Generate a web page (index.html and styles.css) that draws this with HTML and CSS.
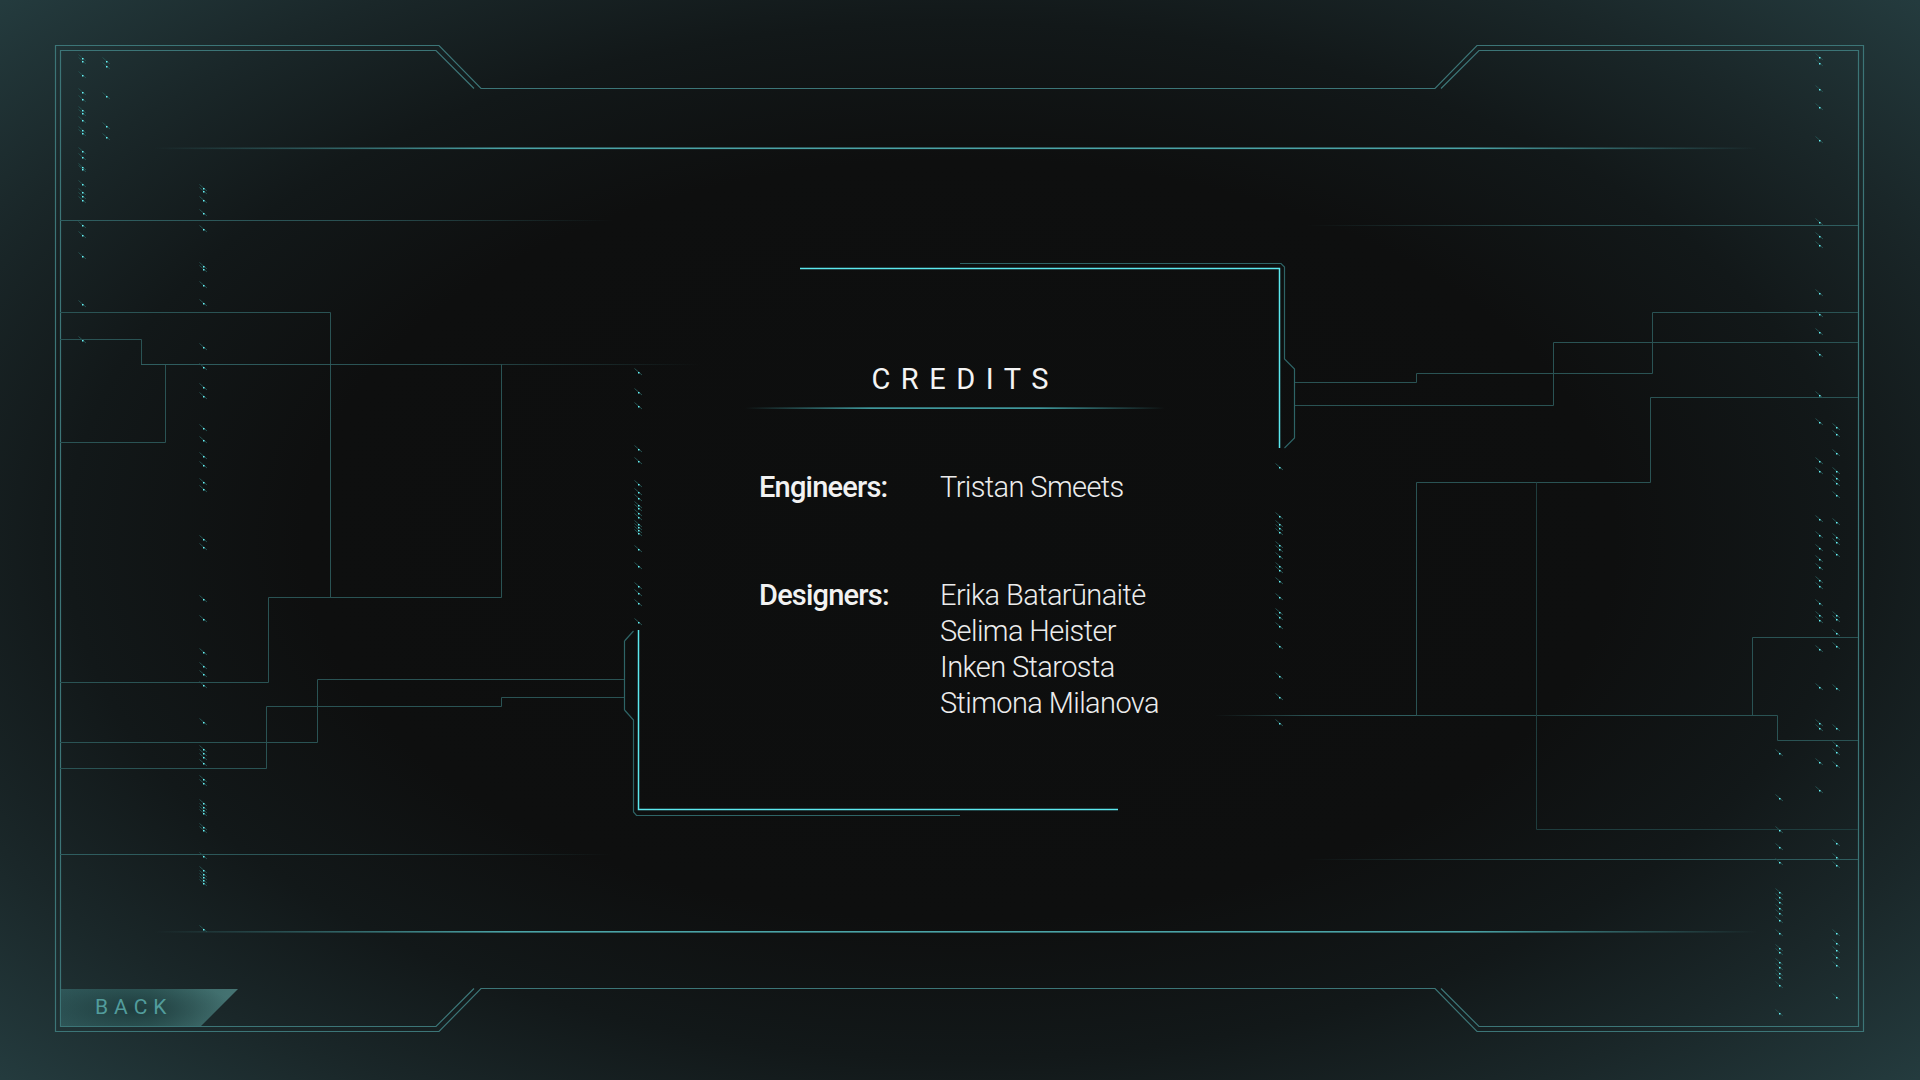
FILE: index.html
```html
<!DOCTYPE html>
<html lang="en">
<head>
<meta charset="utf-8">
<title>Credits</title>
<link rel="stylesheet" href="styles.css">
</head>
<body>
<div class="screen">
  <svg class="deco" width="1920" height="1080" viewBox="0 0 1920 1080" aria-hidden="true">
    <defs>
      <linearGradient id="glow" x1="0" y1="0" x2="1" y2="0">
        <stop offset="0" stop-color="#4aa3a6" stop-opacity="0"/>
        <stop offset="0.22" stop-color="#4aa3a6" stop-opacity="1"/>
        <stop offset="0.82" stop-color="#4aa3a6" stop-opacity="1"/>
        <stop offset="1" stop-color="#4aa3a6" stop-opacity="0"/>
      </linearGradient>
      <linearGradient id="fadeR" x1="0" y1="0" x2="1" y2="0">
        <stop offset="0" stop-color="#2f5e60" stop-opacity="1"/>
        <stop offset="0.55" stop-color="#2f5e60" stop-opacity="0.8"/>
        <stop offset="1" stop-color="#2f5e60" stop-opacity="0"/>
      </linearGradient>
      <linearGradient id="fadeL" x1="0" y1="0" x2="1" y2="0">
        <stop offset="0" stop-color="#2f5e60" stop-opacity="0"/>
        <stop offset="0.45" stop-color="#2f5e60" stop-opacity="0.8"/>
        <stop offset="1" stop-color="#2f5e60" stop-opacity="1"/>
      </linearGradient>
      <linearGradient id="rule" x1="0" y1="0" x2="1" y2="0">
        <stop offset="0" stop-color="#5ce8ee" stop-opacity="0"/>
        <stop offset="0.3" stop-color="#5ce8ee" stop-opacity="0.9"/>
        <stop offset="0.7" stop-color="#5ce8ee" stop-opacity="0.9"/>
        <stop offset="1" stop-color="#5ce8ee" stop-opacity="0"/>
      </linearGradient>
      <g id="d">
        <path d="M-3.5 -3.5 L4 3" stroke="#24504f" stroke-width="1"/>
        <rect x="0" y="0" width="1.5" height="1.5" fill="#66f4f7"/>
      </g>
    </defs>

    <!-- frame -->
    <g class="frame" fill="none">
      <path d="M55.5 45.5 H439 L481 88.5 H1435 L1477 45.5 H1863.5 V1031.5 H1477 L1435 988.5 H481 L439 1031.5 H55.5 Z"/>
      <path d="M474 88.5 L436 50.5 H60.5 V1026.5 H436 L474 988.5"/>
      <path d="M1441 88.5 L1479 50.5 H1858.5 V1026.5 H1479 L1441 988.5"/>
    </g>

    <!-- glow lines -->
    <rect x="154" y="147.5" width="1603" height="1.6" fill="url(#glow)"/>
    <rect x="154" y="931" width="1603" height="1.6" fill="url(#glow)"/>

    <!-- faint horizontals -->
    <rect x="60" y="220" width="554" height="1" fill="url(#fadeR)"/>
    <rect x="1306" y="225" width="552" height="1" fill="url(#fadeL)"/>
    <rect x="60" y="854" width="552" height="1" fill="url(#fadeR)"/>
    <rect x="1304" y="859" width="554" height="1" fill="url(#fadeL)"/>

    <!-- left circuits -->
    <g class="circ" fill="none">
      <path d="M60 312.5 H330.5 V597.5"/>
      <path d="M268.5 597.5 H501.5 V364.5"/>
      <path d="M60 339.5 H141.5 V364.5"/>
      <path d="M165.5 364.5 V442.5 H60"/>
      <path d="M268.5 597.5 V682.5 H60"/>
      <path d="M624 679.5 H317.5 V742.5 H60"/>
      <path d="M624 697.5 H501.5 V706.5 H266.5 V768.5 H60"/>
    </g>
    <rect x="141" y="364" width="560" height="1" fill="url(#fadeR)"/>

    <!-- right circuits -->
    <g class="circ" fill="none">
      <path d="M1294 382.5 H1416.5 V373.5 H1652.5 V312.5 H1858"/>
      <path d="M1294 405.5 H1553.5 V342.5 H1858"/>
      <path d="M1858 397.5 H1650.5 V482.5 H1416.5 V715"/>
      <path d="M1416 715.5 H1777.5 V740.5 H1858"/>
      <path d="M1752.5 715 V637.5 H1858"/>
    </g>
    <path class="circ-dim" fill="none" d="M1536.5 482.5 V829.5 H1858"/>
    <rect x="1214" y="715" width="202" height="1" fill="url(#fadeL)"/>

    <!-- credits panel -->
    <g class="panel-dim" fill="none">
      <path d="M960 263.5 H1281 L1284.5 267 V359 L1294.5 369 V438 L1284.5 448"/>
      <path d="M624.5 641 V710 M624.5 641 L633.5 631 M624.5 710 L633.5 720 V812 L636.5 815.5 H960"/>
    </g>
    <g class="panel-bright" fill="none">
      <path d="M800 268.5 H1279.5 V448"/>
      <path d="M638.5 630 V809.5 H1118"/>
    </g>
    <rect x="745" y="407.5" width="420" height="1.2" fill="url(#rule)"/>

    <!-- dots -->
    <g class="dots">
      <use href="#d" x="82" y="58"/><use href="#d" x="82" y="61"/><use href="#d" x="82" y="75"/><use href="#d" x="82" y="92"/><use href="#d" x="82" y="99"/><use href="#d" x="82" y="110"/><use href="#d" x="82" y="113"/><use href="#d" x="82" y="120"/><use href="#d" x="82" y="130"/><use href="#d" x="82" y="133"/><use href="#d" x="82" y="151"/><use href="#d" x="82" y="157"/><use href="#d" x="82" y="167"/><use href="#d" x="82" y="169"/><use href="#d" x="82" y="184"/><use href="#d" x="82" y="192"/><use href="#d" x="82" y="196"/><use href="#d" x="82" y="200"/><use href="#d" x="82" y="225"/><use href="#d" x="82" y="235"/><use href="#d" x="82" y="256"/><use href="#d" x="82" y="304"/><use href="#d" x="82" y="340"/>
      <use href="#d" x="106" y="61"/><use href="#d" x="106" y="66"/><use href="#d" x="106" y="96"/><use href="#d" x="106" y="126"/><use href="#d" x="106" y="137"/>
      <use href="#d" x="203" y="188"/><use href="#d" x="203" y="191"/><use href="#d" x="203" y="200"/><use href="#d" x="203" y="213"/><use href="#d" x="203" y="229"/><use href="#d" x="203" y="266"/><use href="#d" x="203" y="269"/><use href="#d" x="203" y="285"/><use href="#d" x="203" y="303"/><use href="#d" x="203" y="347"/><use href="#d" x="203" y="367"/><use href="#d" x="203" y="387"/><use href="#d" x="203" y="396"/><use href="#d" x="203" y="428"/><use href="#d" x="203" y="440"/><use href="#d" x="203" y="456"/><use href="#d" x="203" y="465"/><use href="#d" x="203" y="482"/><use href="#d" x="203" y="489"/><use href="#d" x="203" y="539"/><use href="#d" x="203" y="547"/><use href="#d" x="203" y="599"/><use href="#d" x="203" y="619"/><use href="#d" x="203" y="652"/><use href="#d" x="203" y="666"/><use href="#d" x="203" y="674"/><use href="#d" x="203" y="685"/><use href="#d" x="203" y="722"/><use href="#d" x="203" y="749"/><use href="#d" x="203" y="753"/><use href="#d" x="203" y="757"/><use href="#d" x="203" y="763"/><use href="#d" x="203" y="779"/><use href="#d" x="203" y="783"/><use href="#d" x="203" y="803"/><use href="#d" x="203" y="807"/><use href="#d" x="203" y="810"/><use href="#d" x="203" y="813"/><use href="#d" x="203" y="827"/><use href="#d" x="203" y="830"/><use href="#d" x="203" y="856"/><use href="#d" x="203" y="870"/><use href="#d" x="203" y="874"/><use href="#d" x="203" y="877"/><use href="#d" x="203" y="880"/><use href="#d" x="203" y="883"/><use href="#d" x="203" y="929"/>
      <use href="#d" x="638" y="372"/><use href="#d" x="638" y="392"/><use href="#d" x="638" y="406"/><use href="#d" x="638" y="449"/><use href="#d" x="638" y="461"/><use href="#d" x="638" y="484"/><use href="#d" x="638" y="492"/><use href="#d" x="638" y="498"/><use href="#d" x="638" y="505"/><use href="#d" x="638" y="508"/><use href="#d" x="638" y="513"/><use href="#d" x="638" y="517"/><use href="#d" x="638" y="524"/><use href="#d" x="638" y="527"/><use href="#d" x="638" y="530"/><use href="#d" x="638" y="533"/><use href="#d" x="638" y="549"/><use href="#d" x="638" y="566"/><use href="#d" x="638" y="586"/><use href="#d" x="638" y="593"/><use href="#d" x="638" y="603"/><use href="#d" x="638" y="622"/>
      <use href="#d" x="1279" y="467"/><use href="#d" x="1279" y="516"/><use href="#d" x="1279" y="524"/><use href="#d" x="1279" y="528"/><use href="#d" x="1279" y="532"/><use href="#d" x="1279" y="545"/><use href="#d" x="1279" y="549"/><use href="#d" x="1279" y="556"/><use href="#d" x="1279" y="566"/><use href="#d" x="1279" y="570"/><use href="#d" x="1279" y="581"/><use href="#d" x="1279" y="597"/><use href="#d" x="1279" y="612"/><use href="#d" x="1279" y="617"/><use href="#d" x="1279" y="626"/><use href="#d" x="1279" y="646"/><use href="#d" x="1279" y="676"/><use href="#d" x="1279" y="697"/><use href="#d" x="1279" y="723"/>
      <use href="#d" x="1819" y="57"/><use href="#d" x="1819" y="63"/><use href="#d" x="1819" y="89"/><use href="#d" x="1819" y="107"/><use href="#d" x="1819" y="140"/><use href="#d" x="1819" y="222"/><use href="#d" x="1819" y="236"/><use href="#d" x="1819" y="245"/><use href="#d" x="1819" y="293"/><use href="#d" x="1819" y="314"/><use href="#d" x="1819" y="332"/><use href="#d" x="1819" y="354"/><use href="#d" x="1819" y="395"/><use href="#d" x="1819" y="422"/><use href="#d" x="1819" y="461"/><use href="#d" x="1819" y="471"/><use href="#d" x="1819" y="519"/><use href="#d" x="1819" y="535"/><use href="#d" x="1819" y="548"/><use href="#d" x="1819" y="559"/><use href="#d" x="1819" y="567"/><use href="#d" x="1819" y="580"/><use href="#d" x="1819" y="586"/><use href="#d" x="1819" y="603"/><use href="#d" x="1819" y="615"/><use href="#d" x="1819" y="620"/><use href="#d" x="1819" y="649"/><use href="#d" x="1819" y="687"/><use href="#d" x="1819" y="723"/><use href="#d" x="1819" y="728"/><use href="#d" x="1819" y="762"/><use href="#d" x="1819" y="790"/>
      <use href="#d" x="1836" y="427"/><use href="#d" x="1836" y="434"/><use href="#d" x="1836" y="453"/><use href="#d" x="1836" y="471"/><use href="#d" x="1836" y="478"/><use href="#d" x="1836" y="483"/><use href="#d" x="1836" y="495"/><use href="#d" x="1836" y="522"/><use href="#d" x="1836" y="537"/><use href="#d" x="1836" y="542"/><use href="#d" x="1836" y="554"/><use href="#d" x="1836" y="615"/><use href="#d" x="1836" y="619"/><use href="#d" x="1836" y="633"/><use href="#d" x="1836" y="646"/><use href="#d" x="1836" y="688"/><use href="#d" x="1836" y="728"/><use href="#d" x="1836" y="745"/><use href="#d" x="1836" y="752"/><use href="#d" x="1836" y="765"/><use href="#d" x="1836" y="843"/><use href="#d" x="1836" y="857"/><use href="#d" x="1836" y="865"/><use href="#d" x="1836" y="933"/><use href="#d" x="1836" y="943"/><use href="#d" x="1836" y="950"/><use href="#d" x="1836" y="957"/><use href="#d" x="1836" y="965"/><use href="#d" x="1836" y="997"/>
      <use href="#d" x="1779" y="753"/><use href="#d" x="1779" y="798"/><use href="#d" x="1779" y="830"/><use href="#d" x="1779" y="847"/><use href="#d" x="1779" y="862"/><use href="#d" x="1779" y="892"/><use href="#d" x="1779" y="897"/><use href="#d" x="1779" y="902"/><use href="#d" x="1779" y="908"/><use href="#d" x="1779" y="913"/><use href="#d" x="1779" y="920"/><use href="#d" x="1779" y="933"/><use href="#d" x="1779" y="948"/><use href="#d" x="1779" y="952"/><use href="#d" x="1779" y="962"/><use href="#d" x="1779" y="967"/><use href="#d" x="1779" y="973"/><use href="#d" x="1779" y="977"/><use href="#d" x="1779" y="985"/><use href="#d" x="1779" y="1013"/>
    </g>
  </svg>

  <main class="credits">
    <h1 class="title">CREDITS</h1>
    <div class="rows">
      <div class="row">
        <div class="label">Engineers:</div>
        <ul class="names">
          <li>Tristan Smeets</li>
        </ul>
      </div>
      <div class="row">
        <div class="label">Designers:</div>
        <ul class="names">
          <li>Erika Batarūnaitė</li>
          <li>Selima Heister</li>
          <li>Inken Starosta</li>
          <li>Stimona Milanova</li>
        </ul>
      </div>
    </div>
  </main>

  <footer class="footer">
    <button class="back" type="button">BACK</button>
  </footer>
</div>
</body>
</html>
```

FILE: styles.css
```css
* { box-sizing: border-box; }

html, body {
  margin: 0;
  padding: 0;
  width: 1920px;
  height: 1080px;
  overflow: hidden;
}

body {
  background: #0e0f0f;
  font-family: Roboto, "Liberation Sans", sans-serif;
  color: #eeeeee;
}

.screen {
  position: relative;
  width: 1920px;
  height: 1080px;
  display: flex;
  flex-direction: column;
  align-items: center;
  background:
    radial-gradient(ellipse 62% 64% at 50% 50%, #0d0e0e 0%, #0e0f0f 55%, #121819 75%, #1a2729 92%, #243b3e 112%);
}

.deco {
  position: absolute;
  left: 0;
  top: 0;
  pointer-events: none;
}

.frame path { stroke: #3c7577; stroke-width: 1.2; }
.circ path { stroke: #2a5354; stroke-width: 1; }
.circ-dim { stroke: #1f3d3e; stroke-width: 1; }
.panel-dim path { stroke: #2e6466; stroke-width: 1.2; }
.panel-bright path { stroke: #5ce8ee; stroke-width: 1.5; }

.credits {
  position: relative;
  width: 420px;
  margin-top: 361px;
}

.title {
  margin: 0;
  font-size: 29px;
  line-height: 36px;
  font-weight: 400;
  letter-spacing: 10.5px;
  padding-left: 10.5px;
  text-align: center;
  color: #f4f4f4;
}

.rows {
  margin-top: 72px;
  padding-left: 9px;
}

.row {
  display: grid;
  grid-template-columns: 181px 1fr;
}

.row + .row { margin-top: 72px; }

.label {
  font-size: 29px;
  line-height: 36px;
  font-weight: 500;
  letter-spacing: -0.8px;
  color: #f2f2f2;
}

.names {
  list-style: none;
  margin: 0;
  padding: 0;
}

.names li {
  font-size: 29px;
  line-height: 36px;
  font-weight: 300;
  letter-spacing: -0.6px;
  color: #ececec;
}

.footer {
  margin-top: auto;
  margin-bottom: 54px;
  align-self: stretch;
  padding-left: 61px;
  position: relative;
}

.back {
  display: block;
  width: 177px;
  height: 37px;
  margin: 0;
  border: 0;
  padding: 0 0 0 34px;
  text-align: left;
  font-family: Roboto, "Liberation Sans", sans-serif;
  font-size: 21px;
  line-height: 37px;
  letter-spacing: 6px;
  color: #529c9c;
  background:
    radial-gradient(ellipse 55% 85% at 42% 55%, rgba(24, 48, 50, 0.75) 0%, rgba(24, 48, 50, 0) 100%),
    linear-gradient(90deg, #2f5759 0%, #33605f 50%, #467473 100%);
  clip-path: polygon(0 0, 100% 0, calc(100% - 37px) 100%, 0 100%);
}
```
